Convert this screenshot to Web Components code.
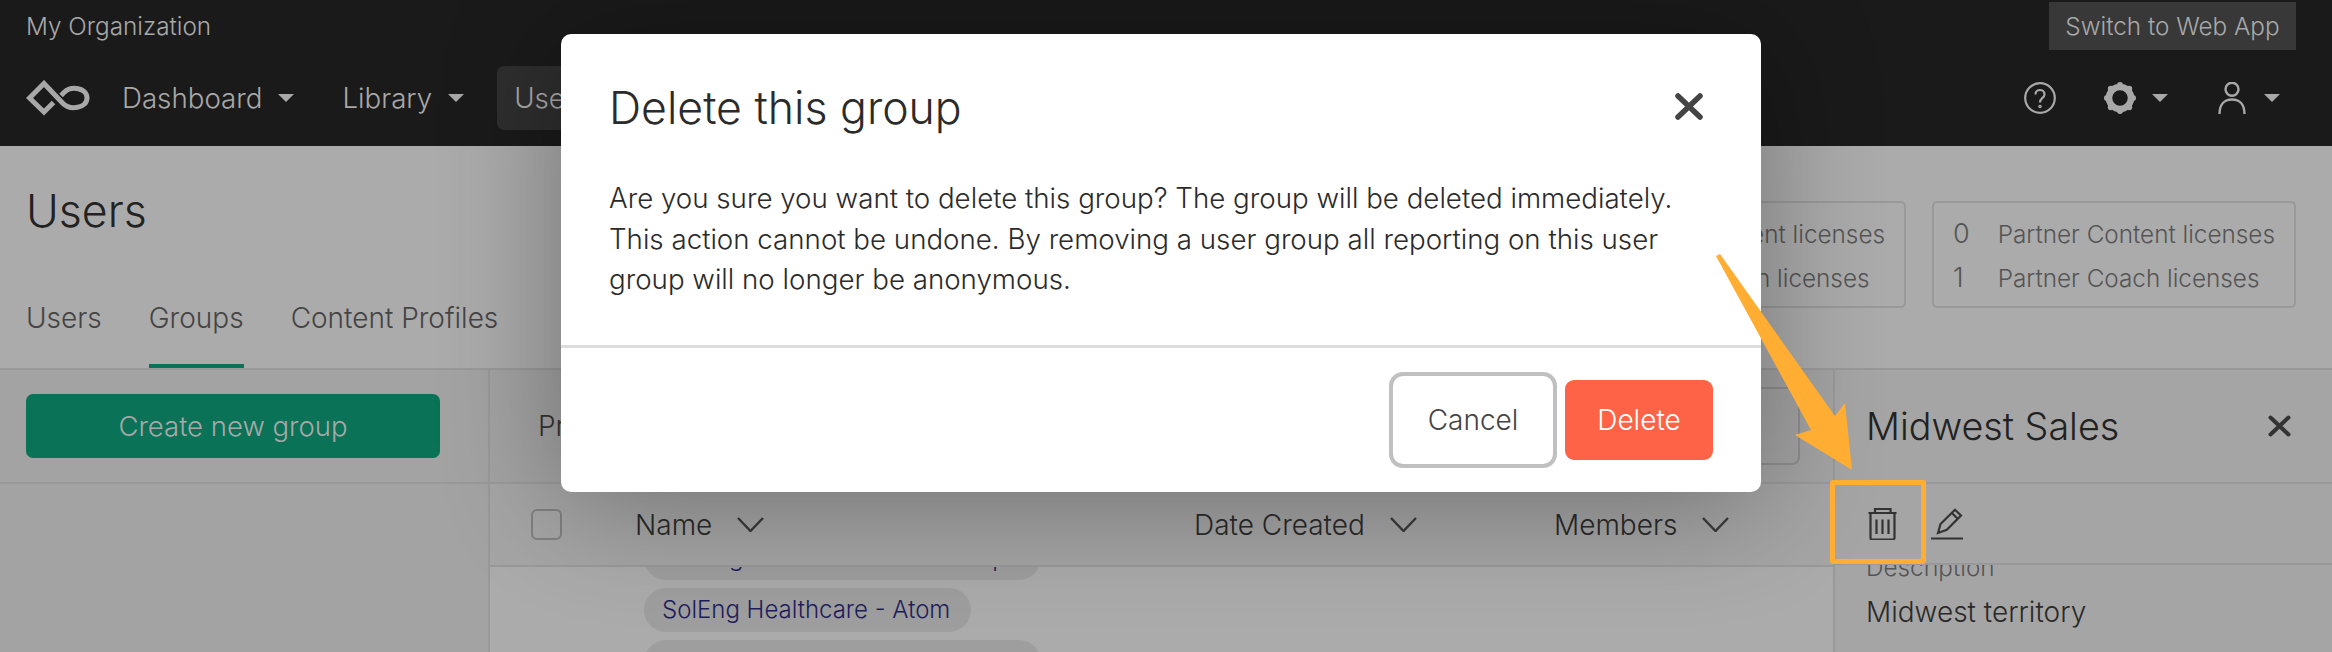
<!DOCTYPE html>
<html>
<head>
<meta charset="utf-8">
<title>Users</title>
<style>
    html, body { margin: 0; padding: 0; background: #ababab; }
    body { font-family: Inter, "Liberation Sans", sans-serif; overflow: hidden; }
</style>
</head>
<body>
<app-page>
    <app-header></app-header>
    <page-head></page-head>
    <page-content></page-content>
    <delete-modal></delete-modal>
    <call-out></call-out>
</app-page>
<script>
    const chevron = `<svg width="27" height="15" viewBox="0 0 27 15" fill="none" stroke="#3a3a3a" stroke-width="2.4"><path d="M1 1l12.5 13L26 1"/></svg>`;

    const component = (tag, css, html) => {
        customElements.define(tag, class extends HTMLElement {
            constructor() {
                super();
                this.attachShadow({ mode: 'open' });
                const template = document.createElement('template');
                template.innerHTML = `<style>${css}</style>${html}`;
                this.shadowRoot.appendChild(template.content.cloneNode(true));
            }
        });
    };

    component('app-page', `
        :host { display: flex; flex-direction: column; position: relative; width: 2332px; height: 652px; overflow: hidden; background: #ababab; font-weight: 300; }
    `, `<slot></slot>`);

    component('nav-item', `
        :host { display: flex; align-items: center; height: 64px; padding: 0 17px; font-size: 27.700px; color: #a8a8a8; border-radius: 7px; }
        :host([active]) { background: #2e2e2e; width: 120px; margin-left: 2px; }
        .caret { width: 0; height: 0; margin-left: 16px; border-left: 8px solid transparent; border-right: 8px solid transparent; border-top: 8px solid #a8a8a8; }
        :host([active]) .caret { display: none; }
    `, `<slot></slot><span class="caret"></span>`);

    component('app-header', `
        :host { display: block; height: 146px; background: #1a1a1a; flex: none; }
        .top { display: flex; justify-content: space-between; align-items: center; height: 48px; padding: 2px 36px 0 26px; font-size: 24.300px; color: #a8a8a8; }
        .switch { display: flex; align-items: center; justify-content: center; width: 247px; height: 48px; background: #383838; }
        nav { display: flex; align-items: center; height: 96px; padding: 0 52px 0 26px; gap: 14px; }
        .logo { display: block; margin-right: 1px; }
        .right { display: flex; align-items: center; margin-left: auto; }
        .right svg { display: block; }
        .caret { width: 0; height: 0; border-left: 8px solid transparent; border-right: 8px solid transparent; border-top: 8px solid #a8a8a8; }
    `, `
        <div class="top"><span>My Organization</span><span class="switch">Switch to Web App</span></div>
        <nav>
            <svg class="logo" width="64" height="36" viewBox="0 0 64 36" fill="none" stroke="#a8a8a8" stroke-width="5">
                <path d="M27.500 22.500L18 32 3.500 18 18 3.500l19 20c7 7 24 5 24-5.500S45 5.500 38 12.500l-3 3"/>
            </svg>
            <nav-item>Dashboard</nav-item>
            <nav-item>Library</nav-item>
            <nav-item active>Users</nav-item>
            <div class="right">
                <svg width="32" height="32" viewBox="0 0 32 32" fill="none" stroke="#a8a8a8" stroke-width="2.200">
                    <circle cx="16" cy="16" r="14.800"/>
                    <path d="M11.500 12.500c0-6 9-6 9 0 0 3.500-4.500 3.500-4.500 8"/>
                    <circle cx="16" cy="24.500" r="0.700"/>
                </svg>
                <svg style="margin-left:48px" width="32" height="32" viewBox="0 0 32 32" fill="#a8a8a8">
                    <circle cx="16" cy="16" r="11" fill="none" stroke="#a8a8a8" stroke-width="6.500"/>
                    <circle cx="16" cy="3" r="3"/><circle cx="25.200" cy="6.800" r="3"/><circle cx="29" cy="16" r="3"/><circle cx="25.200" cy="25.200" r="3"/>
                    <circle cx="16" cy="29" r="3"/><circle cx="6.800" cy="25.200" r="3"/><circle cx="3" cy="16" r="3"/><circle cx="6.800" cy="6.800" r="3"/>
                </svg>
                <span class="caret" style="margin-left:16px"></span>
                <svg style="margin-left:50px" width="28" height="32" viewBox="0 0 28 32" fill="none" stroke="#a8a8a8" stroke-width="2.400">
                    <circle cx="14" cy="7.300" r="6.500"/>
                    <path d="M1.500 32c0-9 4.500-14.500 12.500-14.500S26.500 23 26.500 32"/>
                </svg>
                <span class="caret" style="margin-left:18px"></span>
            </div>
        </nav>
    `);

    component('licence-box', `
        :host { display: grid; grid-template-columns: auto auto; column-gap: 28px; align-content: center; height: 101px; padding: 2px 19px 0 19px; border: 2px solid #999; border-radius: 5px; font-size: 24.300px; line-height: 44px; color: #555; }
        ::slotted(.num) { font-size: 27px; }
    `, `<slot></slot>`);

    component('tab-link', `
        :host { display: block; height: 66px; font-size: 28px; line-height: 40px; color: #444; border-bottom: 4px solid transparent; }
        :host([active]) { border-bottom-color: #097257; }
    `, `<slot></slot>`);

    component('page-head', `
        :host { display: flex; justify-content: space-between; height: 222px; padding: 0 36px 0 26px; border-bottom: 2px solid #999; flex: none; }
        h1 { margin: 33px 0 55px; font-size: 44.600px; line-height: 64px; font-weight: 300; color: #222; }
        .tabs { display: flex; gap: 47px; }
        .boxes { display: flex; gap: 26px; padding-top: 55px; }
    `, `
        <div>
            <h1>Users</h1>
            <div class="tabs"><tab-link>Users</tab-link><tab-link active>Groups</tab-link><tab-link>Content Profiles</tab-link></div>
        </div>
        <div class="boxes">
            <licence-box><span class="num">0</span><span>Content licenses</span><span class="num">1</span><span>Coach licenses</span></licence-box>
            <licence-box><span class="num">0</span><span>Partner Content licenses</span><span class="num">1</span><span>Partner Coach licenses</span></licence-box>
        </div>
    `);

    component('group-pill', `
        :host { display: block; box-sizing: border-box; height: 44px; padding: 0 18px; background: #9e9e9e; border-radius: 22px; font-size: 24px; line-height: 44px; color: #1e1d5c; white-space: nowrap; overflow: hidden; }
        :host([wide]) { width: 397px; }
        :host([short]) { width: 327px; }
    `, `<slot></slot>`);

    component('group-sidebar', `
        :host { display: block; background: #a3a3a3; border-right: 2px solid #999; }
        .bar { height: 114px; padding: 24px 0 0 26px; box-sizing: border-box; border-bottom: 2px solid #999; }
        .create { display: flex; align-items: center; justify-content: center; width: 414px; height: 64px; background: #097257; border-radius: 7px; font-size: 27.500px; color: #a8a8a8; }
    `, `<div class="bar"><div class="create">Create new group</div></div>`);

    component('group-table', `
        :host { display: flex; flex-direction: column; min-width: 0; }
        .bar { display: flex; align-items: center; justify-content: space-between; height: 114px; flex: none; box-sizing: border-box; padding: 0 33px 0 48px; background: #a3a3a3; border-bottom: 2px solid #999; font-size: 28px; color: #333; }
        .search { width: 400px; height: 78px; border: 2px solid #8e8e8e; border-radius: 8px; box-sizing: border-box; }
        .head { display: grid; grid-template-columns: 104px 559px 360px auto; align-items: center; height: 83px; flex: none; box-sizing: border-box; padding-left: 41px; border-bottom: 2px solid #999; background: #a5a5a5; font-size: 28px; color: #2a2a2a; }
        .head span { display: flex; align-items: center; gap: 25px; }
        .check { width: 31px; height: 31px; box-sizing: border-box; border: 2px solid #808080; border-radius: 6px; }
        .rows { flex: 1; overflow: hidden; }
        .list { display: flex; flex-direction: column; gap: 8px; margin: -31px 0 0 154px; }
        .clip { letter-spacing: .7px; }
    `, `
        <div class="bar"><span>Pr</span><div class="search"></div></div>
        <div class="head">
            <div class="check"></div>
            <span>Name ${chevron}</span>
            <span>Date Created ${chevron}</span>
            <span>Members ${chevron}</span>
        </div>
        <div class="rows"><div class="list">
            <group-pill wide><span class="clip">SolEng Finance - Classic Expo...</span></group-pill>
            <group-pill short>SolEng Healthcare - Atom</group-pill>
            <group-pill wide></group-pill>
        </div></div>
    `);

    component('group-detail', `
        :host { display: flex; flex-direction: column; background: #a5a5a5; border-left: 2px solid #999; min-width: 0; }
        .title { display: flex; align-items: center; justify-content: space-between; height: 114px; flex: none; box-sizing: border-box; padding: 0 41px 0 31px; border-bottom: 2px solid #999; font-size: 37.700px; color: #222; }
        .title svg { display: block; }
        .actions { display: flex; align-items: center; gap: 34px; height: 81px; flex: none; box-sizing: border-box; padding-left: 33px; border-bottom: 2px solid #999; }
        .body { flex: 1; overflow: hidden; padding-left: 31px; }
        .label { margin-top: -17px; font-size: 24.300px; line-height: 38px; color: #555; }
        .value { margin-top: 6px; font-size: 28px; line-height: 40px; color: #2a2a2a; }
    `, `
        <div class="title"><span>Midwest Sales</span>
            <svg width="23" height="22" viewBox="0 0 23 22" fill="none" stroke="#333" stroke-width="4" stroke-linecap="round"><path d="M2.500 2.500l18 17M20.500 2.500l-18 17"/></svg>
        </div>
        <div class="actions">
            <svg width="29" height="32" viewBox="0 0 29 32" fill="none" stroke="#333" stroke-width="2.200">
                <path d="M.5 5h28M7 5V1h15.500v4M2.500 5v25a1.500 1.500 0 0 0 1.500 1.500h21a1.500 1.500 0 0 0 1.500-1.500V5M8.500 11.500V26M14.500 11.500V26M20.500 11.500V26"/>
            </svg>
            <svg width="32" height="32" viewBox="0 0 32 32" fill="none" stroke="#333" stroke-width="2.200">
                <path d="M0 30.500h32M7 25l2.500-9L24 1.800l6 5.700L15.800 21.800zM20.800 5l6 5.700"/>
            </svg>
        </div>
        <div class="body"><div class="label">Description</div><div class="value">Midwest territory</div></div>
    `);

    component('page-content', `
        :host { display: grid; grid-template-columns: 490px 1fr 499px; flex: 1; min-height: 0; }
    `, `<group-sidebar></group-sidebar><group-table></group-table><group-detail></group-detail>`);

    component('delete-modal', `
        :host { display: flex; flex-direction: column; position: absolute; left: 561px; top: 34px; width: 1200px; height: 458px; background: #fff; border-radius: 10px; box-shadow: 0 10px 120px rgba(0,0,0,.33); color: #2b2b2b; }
        header { display: flex; align-items: center; justify-content: space-between; height: 144px; flex: none; box-sizing: border-box; padding: 0 58px 0 48px; font-size: 44.600px; }
        header span { margin-top: 3px; }
        header svg { display: block; }
        p { margin: 0; flex: 1; padding: 0 49px 0 48px; font-size: 27.700px; line-height: 40.500px; }
        footer { display: flex; align-items: center; justify-content: flex-end; gap: 8px; height: 147px; flex: none; box-sizing: border-box; padding-right: 48px; border-top: 3px solid #ddd; }
        .btn { display: flex; align-items: center; justify-content: center; box-sizing: border-box; font-size: 28px; }
        .cancel { width: 168px; height: 96px; border: 4px solid #c0c0c0; border-radius: 14px; color: #444; }
        .delete { width: 148px; height: 80px; border-radius: 9px; background: #ff6347; color: #fff; }
    `, `
        <header><span>Delete this group</span>
            <svg width="28" height="27" viewBox="0 0 28 27" fill="none" stroke="#444" stroke-width="5.500" stroke-linecap="round"><path d="M3 3l22 21M25 3L3 24"/></svg>
        </header>
        <p>Are you sure you want to delete this group? The group will be deleted immediately. This action cannot be undone. By removing a user group all reporting on this user group will no longer be anonymous.</p>
        <footer><div class="btn cancel">Cancel</div><div class="btn delete">Delete</div></footer>
    `);

    component('call-out', `
        :host { position: absolute; inset: 0; pointer-events: none; }
        svg { position: absolute; left: 0; top: 0; }
        .box { position: absolute; left: 1830px; top: 480px; width: 96px; height: 84px; box-sizing: border-box; border: 5px solid #ffad33; border-radius: 3px; }
    `, `
        <svg width="2332" height="652"><polygon fill="#ffad33" points="1716,256 1720,254 1835,416 1845,403 1852,470 1795,435 1811,430"/></svg>
        <div class="box"></div>
    `);
</script>
</body>
</html>
